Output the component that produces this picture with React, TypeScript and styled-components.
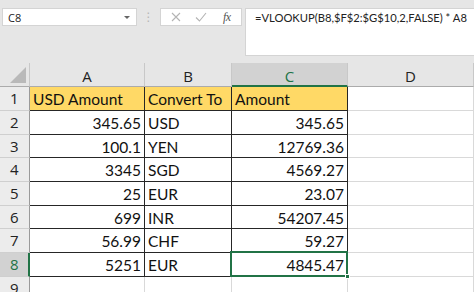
import React from "react";
import styled, { createGlobalStyle, css } from "styled-components";

const Global = createGlobalStyle`
  html, body { margin: 0; padding: 0; background: #fff; }
  body { font-family: "Lato", "Liberation Sans", sans-serif; }
`;

const GREEN = "#217346";

const Frame = styled.div`
  width: 474px;
  height: 292px;
  overflow: hidden;
  display: flex;
  flex-direction: column;
  background: #fff;
`;

const FormulaArea = styled.div`
  height: 63px;
  flex: none;
  background: #e6e6e6;
  display: flex;
  align-items: flex-start;
  padding-top: 8px;
  box-sizing: border-box;
`;

const NameBox = styled.div`
  margin-left: 2px;
  width: 135px;
  height: 18px;
  background: #fff;
  border: 1px solid #d4d4d4;
  box-sizing: border-box;
  display: flex;
  align-items: center;
  justify-content: space-between;
  padding: 0 5px 0 5px;
  font-family: "Open Sans", "Liberation Sans", sans-serif;
  font-size: 11px;
  color: #222;
`;

const Caret = styled.span`
  width: 0;
  height: 0;
  border-left: 3px solid transparent;
  border-right: 3px solid transparent;
  border-top: 3px solid #666;
  margin-right: 1px;
`;

const Grip = styled.div`
  width: 23px;
  height: 18px;
  display: flex;
  align-items: center;
  justify-content: center;
  color: #b5b5b5;
  font-size: 12px;
  font-family: "DejaVu Sans", sans-serif;
`;

const IconBox = styled.div`
  width: 82px;
  height: 18px;
  background: #fff;
  border: 1px solid #d4d4d4;
  box-sizing: border-box;
  display: flex;
  align-items: center;
  padding-left: 10px;
  gap: 14px;
`;

const Fx = styled.span`
  font-family: "Liberation Serif", serif;
  font-style: italic;
  font-size: 12px;
  color: #555;
  margin-left: 2px;
  letter-spacing: -0.5px;
`;

const FormulaBox = styled.div`
  margin-left: 3px;
  flex: 1;
  height: 48px;
  background: #fff;
  border: 1px solid #d4d4d4;
  border-right: none;
  box-sizing: border-box;
  padding: 2px 0 0 9px;
  font-family: "Lato", "Liberation Sans", sans-serif;
  font-size: 11.2px;
  color: #222;
  white-space: nowrap;
`;

const Sheet = styled.div`
  flex: 1;
  display: grid;
  grid-template-columns: 30px 115px 87px 116px 126px;
  grid-template-rows: 24px 24px 24px 23px 24px 24px 23px 24px 24px 24px;
`;

const ColHead = styled.div<{ $sel?: boolean }>`
  box-sizing: border-box;
  background: ${(p) => (p.$sel ? "#d2d2d2" : "#e6e6e6")};
  border-right: 1px solid #c8c8c8;
  border-bottom: ${(p) => (p.$sel ? `2px solid ${GREEN}` : "1px solid #ababab")};
  display: flex;
  align-items: center;
  justify-content: center;
  font-family: "Open Sans", "Liberation Sans", sans-serif;
  font-size: 15px;
  color: ${(p) => (p.$sel ? GREEN : "#222")};
  padding-top: ${(p) => (p.$sel ? "3px" : "2px")};
`;

const Corner = styled.div`
  box-sizing: border-box;
  background: #e6e6e6;
  border-right: 1px solid #c8c8c8;
  border-bottom: 1px solid #ababab;
  display: flex;
  align-items: flex-end;
  justify-content: flex-end;
  padding: 0 3px 3px 0;
`;

const Triangle = styled.div`
  width: 0;
  height: 0;
  border-left: 16px solid transparent;
  border-bottom: 16px solid #b9b9b9;
`;

const RowHead = styled.div<{ $sel?: boolean }>`
  box-sizing: border-box;
  background: ${(p) => (p.$sel ? "#d2d2d2" : "#ececec")};
  border-right: ${(p) => (p.$sel ? `2px solid ${GREEN}` : "1px solid #9a9a9a")};
  border-bottom: 1px solid #cfcfcf;
  display: flex;
  align-items: flex-start;
  padding: 1px 0 0 10px;
  line-height: 21px;
  font-family: "Open Sans", "Liberation Sans", sans-serif;
  font-size: 15px;
  color: ${(p) => (p.$sel ? GREEN : "#222")};
`;

const Cell = styled.div<{ $kind: "data" | "empty"; $head?: boolean; $right?: boolean; $selected?: boolean }>`
  position: relative;
  box-sizing: border-box;
  display: flex;
  align-items: center;
  justify-content: ${(p) => (p.$right ? "flex-end" : "flex-start")};
  padding: 1px 3px 0 3px;
  font-family: "Lato", "Liberation Sans", sans-serif;
  font-size: 15.5px;
  color: #111;
  white-space: nowrap;
  background: ${(p) => (p.$head ? "#ffd966" : "#fff")};
  ${(p) =>
    p.$kind === "data"
      ? css`
          border-right: 1px solid #262626;
          border-bottom: 1px solid #262626;
        `
      : css`
          border-right: 1px solid #d9d9d9;
          border-bottom: 1px solid #d9d9d9;
        `}
  ${(p) =>
    p.$selected &&
    css`
      &::after {
        content: "";
        position: absolute;
        left: -2px;
        top: -2px;
        right: -1px;
        bottom: -1px;
        border: 2px solid ${GREEN};
        pointer-events: none;
      }
    `}
`;

const Handle = styled.span`
  position: absolute;
  right: -3px;
  bottom: -3px;
  width: 5px;
  height: 5px;
  background: ${GREEN};
  border: 1px solid #fff;
  box-sizing: border-box;
  z-index: 2;
`;

const rows: [string, string, string][] = [
  ["345.65", "USD", "345.65"],
  ["100.1", "YEN", "12769.36"],
  ["3345", "SGD", "4569.27"],
  ["25", "EUR", "23.07"],
  ["699", "INR", "54207.45"],
  ["56.99", "CHF", "59.27"],
  ["5251", "EUR", "4845.47"],
];

const XIcon = () => (
  <svg width="10" height="10" viewBox="0 0 10 10">
    <path d="M1 1 L9 9 M9 1 L1 9" stroke="#b4b4b4" strokeWidth="1.1" fill="none" />
  </svg>
);

const CheckIcon = () => (
  <svg width="12" height="10" viewBox="0 0 12 10">
    <path d="M1 5.5 L4.5 9 L11 1" stroke="#b4b4b4" strokeWidth="1.1" fill="none" />
  </svg>
);

export default function App() {
  return (
    <Frame>
      <Global />
      <FormulaArea>
        <NameBox>
          <span>C8</span>
          <Caret />
        </NameBox>
        <Grip>⋮</Grip>
        <IconBox>
          <XIcon />
          <CheckIcon />
          <Fx>fx</Fx>
        </IconBox>
        <FormulaBox>=VLOOKUP(B8,$F$2:$G$10,2,FALSE) * A8</FormulaBox>
      </FormulaArea>
      <Sheet>
        <Corner>
          <Triangle />
        </Corner>
        <ColHead>A</ColHead>
        <ColHead>B</ColHead>
        <ColHead $sel>C</ColHead>
        <ColHead>D</ColHead>

        <RowHead>1</RowHead>
        <Cell $kind="data" $head>USD Amount</Cell>
        <Cell $kind="data" $head>Convert To</Cell>
        <Cell $kind="data" $head>Amount</Cell>
        <Cell $kind="empty" />

        {rows.map((r, i) => {
          const n = i + 2;
          const sel = n === 8;
          return (
            <React.Fragment key={n}>
              <RowHead $sel={sel}>{n}</RowHead>
              <Cell $kind="data" $right>{r[0]}</Cell>
              <Cell $kind="data">{r[1]}</Cell>
              <Cell $kind="data" $right $selected={sel}>
                {r[2]}
                {sel && <Handle />}
              </Cell>
              <Cell $kind="empty" />
            </React.Fragment>
          );
        })}

        <RowHead>9</RowHead>
        <Cell $kind="empty" />
        <Cell $kind="empty" />
        <Cell $kind="empty" />
        <Cell $kind="empty" />
      </Sheet>
    </Frame>
  );
}
